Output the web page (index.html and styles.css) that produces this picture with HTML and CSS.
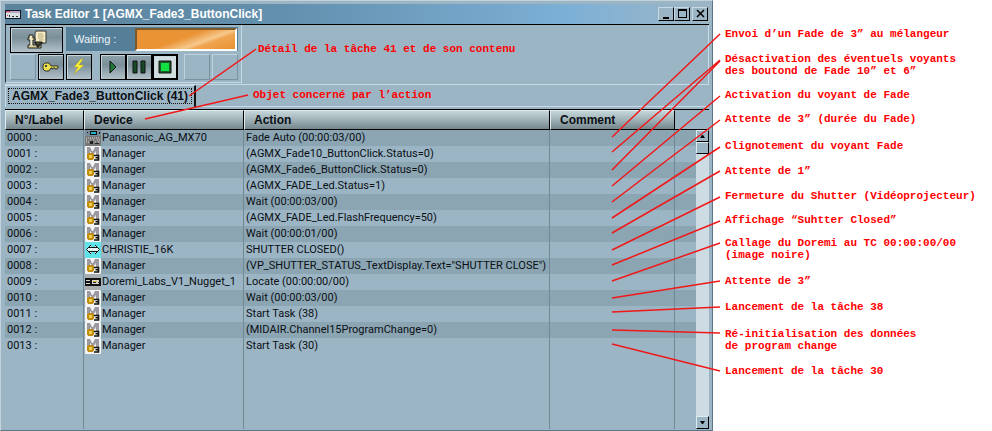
FILE: index.html
```
<!DOCTYPE html>
<html lang="fr">

<head>
  <meta charset="UTF-8">
  <meta name="viewport" content="width=device-width, initial-scale=1.0">
  <title>Task Editor 1</title>
  <link rel="stylesheet" href="styles.css">
</head>

<body>
  <!-- Icônes des machines -->
  <svg class="symbols" width="0" height="0" aria-hidden="true">
    <symbol id="manager" viewBox="0 0 16 16">
      <rect width="16" height="16" rx="1" fill="#f4f4f2"/>
      <path d="M2 10V1h3l2 4 1 0 2-4h4v8h-3V5L8 9 5 5v5z" fill="#9c98a2"/>
      <path d="M3 7h5v1h1v5H8v1H3v-1H2V8h1z" fill="#c08c0c"/>
      <path d="M4 9h3v3H4z" fill="#f0cf50"/>
      <path d="M9 9.500h4.500v4.500H9M10.500 11.700H14" fill="none" stroke="#111" stroke-width="1.600"/>
    </symbol>
    <symbol id="mixer" viewBox="0 0 16 16">
      <path d="M0 0h16v16H0z" fill="#777"/>
      <path d="M0 0h16v6H0z" fill="#788b98"/>
      <path d="M5 1h7v4H5z" fill="#111"/>
      <path d="M6 2h5v2H6z" fill="#1eb5c8"/>
      <path d="M2 2h1v1H2zM14 2h1v2h-1z" fill="#111"/>
      <path d="M1 8h3M5 8h3M9 8h1M11 8h3M1 10h2M5 10h2M8 10h2M12 10h3M1 12h3M10 12h2M13 12h1" stroke="#ddd" stroke-dasharray="1 1"/>
      <path d="M5 11h3v3H5zM10 13h4v1h-4z" fill="#222"/>
    </symbol>
    <symbol id="projector" viewBox="0 0 16 16">
      <path d="M0 0h16v16H0z" fill="#5fe3e8"/>
      <path d="M6 3L1 7.500 6 12V9.500h4V12l5-4.500L10 3v2.500H6z" fill="#e6f6f6"/>
      <path d="M6 3L1.500 7.500 6 12M10 3l4.500 4.500L10 12M4 5.500h8M4 9.500h8" fill="none" stroke="#111"/>
    </symbol>
    <symbol id="player" viewBox="0 0 16 16">
      <path d="M0 0h16v16H0z" fill="#a9adb0"/>
      <path d="M0 4h16v8H0z" fill="#111"/>
      <path d="M1 6h4v1H1zM1 9h4v1H1zM7 6h7v4H7z" fill="#d8d8d0"/>
      <path d="M8 7h4v1H8z" fill="#d5b92f"/>
      <path d="M8 8h3v1H8zM13 8h1v1h-1z" fill="#222"/>
    </symbol>
  </svg>

  <div class="page">
    <main class="editor">
      <header class="titlebar">
        <svg class="title-icon" width="16" height="9" viewBox="0 0 16 9" aria-hidden="true">
          <path d="M0 0h16v9H0z" fill="#15152a"/>
          <path d="M1 1h14v2H1z" fill="#b9a5c4"/>
          <path d="M1 3h14v5H1z" fill="#dbe2e6"/>
          <path d="M1 1h4v1H1zM2 5h1v1H2z" fill="#d0455a"/>
          <path d="M4 5h1v2H4zM7 6h2v1H7zM11 6h2v1h-2z" fill="#333"/>
        </svg>
        <h1>Task Editor 1 [AGMX_Fade3_ButtonClick]</h1>
        <div class="window-buttons">
          <button type="button" aria-label="Minimize"><svg width="12" height="12" viewBox="0 0 12 12"><path d="M3 9h6v2H3z"/></svg></button>
          <button type="button" aria-label="Maximize"><svg width="12" height="12" viewBox="0 0 12 12"><path d="M2 1h9v9H2zM3 3v6h7V3z" fill-rule="evenodd"/></svg></button>
          <button type="button" class="close" aria-label="Close"><svg width="12" height="12" viewBox="0 0 12 12"><path d="M3 2l7 7M10 2l-7 7" stroke="#000" stroke-width="1.500"/></svg></button>
        </div>
      </header>

      <section class="toolbar">
        <div class="tools">
          <div class="tools-row">
            <button type="button" class="tool wide" aria-label="Edit task">
              <svg width="22" height="20" viewBox="0 0 22 20">
                <path d="M10 1h10v12H9V3z" fill="#f6edc8" stroke="#333"/>
                <path d="M12 4h5M12 6h6M12 8h5M13 10h5" stroke="#b5a97a"/>
                <path d="M3 5h4v3h2v2H7v5h8v3H2v-3h2v-5H2V8h1z" fill="#d9d29a" stroke="#222"/>
                <path d="M5 6v9" stroke="#fff"/>
                <path d="M9 12h7v2h-3v3h-2v-3H9z" fill="#5a5a38" stroke="#111"/>
              </svg>
            </button>
            <div class="waiting">
              <label for="progress">Waiting :</label>
              <output id="progress" class="progress"></output>
            </div>
          </div>
          <div class="tools-row">
            <span class="slot"></span>
            <button type="button" class="tool" aria-label="Lock">
              <svg width="18" height="14" viewBox="0 0 18 14">
                <path d="M1 5l2-2h4l2 3h7v2h-1v1h-2V8h-2v1h-1V8H9l-2 3H3L1 9z" fill="#e8df4a" stroke="#333"/>
                <path d="M3 5h2v2H3z" fill="#444"/>
              </svg>
            </button>
            <button type="button" class="tool" aria-label="Trigger">
              <svg width="16" height="18" viewBox="0 0 16 18">
                <path d="M10 1L3 9h4l-4 7 10-9H8l4-6z" fill="#fff233" stroke="#a89e28" stroke-width=".5"/>
              </svg>
            </button>
            <span class="spacer"></span>
            <button type="button" class="tool joined" aria-label="Play">
              <svg width="12" height="14" viewBox="0 0 12 14"><path d="M3 1v12l6-6z" fill="#1f7a37" stroke="#111"/></svg>
            </button>
            <button type="button" class="tool joined" aria-label="Pause">
              <svg width="14" height="14" viewBox="0 0 14 14"><path d="M1 1h4v12H1zM9 1h4v12H9z" fill="#184a28" stroke="#111"/></svg>
            </button>
            <button type="button" class="tool joined active" aria-label="Stop">
              <svg width="14" height="14" viewBox="0 0 14 14"><path d="M1 1h12v12H1z" fill="#1c5a2c" stroke="#111"/><path d="M3 3h8v8H3z" fill="#10e040"/></svg>
            </button>
            <span class="spacer"></span>
            <span class="slot"></span>
            <span class="slot"></span>
          </div>
        </div>
      </section>

      <nav class="tabs">
        <button type="button" class="tab"><span>AGMX_Fade3_ButtonClick (41)</span></button>
      </nav>

      <div class="list">
        <table class="tasks">
          <colgroup>
            <col class="col-label">
            <col class="col-device">
            <col class="col-action">
            <col class="col-comment">
            <col>
          </colgroup>
          <thead>
            <tr>
              <th>N°/Label</th>
              <th>Device</th>
              <th>Action</th>
              <th>Comment</th>
              <td></td>
            </tr>
          </thead>
          <tbody>
            <tr><td>0000 :</td><td><svg class="icon"><use href="#mixer"/></svg>Panasonic_AG_MX70</td><td>Fade Auto (00:00:03/00)</td><td></td><td></td></tr>
            <tr><td>0001 :</td><td><svg class="icon"><use href="#manager"/></svg>Manager</td><td>(AGMX_Fade10_ButtonClick.Status=0)</td><td></td><td></td></tr>
            <tr><td>0002 :</td><td><svg class="icon"><use href="#manager"/></svg>Manager</td><td>(AGMX_Fade6_ButtonClick.Status=0)</td><td></td><td></td></tr>
            <tr><td>0003 :</td><td><svg class="icon"><use href="#manager"/></svg>Manager</td><td>(AGMX_FADE_Led.Status=1)</td><td></td><td></td></tr>
            <tr><td>0004 :</td><td><svg class="icon"><use href="#manager"/></svg>Manager</td><td>Wait (00:00:03/00)</td><td></td><td></td></tr>
            <tr><td>0005 :</td><td><svg class="icon"><use href="#manager"/></svg>Manager</td><td>(AGMX_FADE_Led.FlashFrequency=50)</td><td></td><td></td></tr>
            <tr><td>0006 :</td><td><svg class="icon"><use href="#manager"/></svg>Manager</td><td>Wait (00:00:01/00)</td><td></td><td></td></tr>
            <tr><td>0007 :</td><td><svg class="icon"><use href="#projector"/></svg>CHRISTIE_16K</td><td>SHUTTER CLOSED()</td><td></td><td></td></tr>
            <tr><td>0008 :</td><td><svg class="icon"><use href="#manager"/></svg>Manager</td><td>(VP_SHUTTER_STATUS_TextDisplay.Text="SHUTTER CLOSE")</td><td></td><td></td></tr>
            <tr><td>0009 :</td><td><svg class="icon"><use href="#player"/></svg>Doremi_Labs_V1_Nugget_1</td><td>Locate (00:00:00/00)</td><td></td><td></td></tr>
            <tr><td>0010 :</td><td><svg class="icon"><use href="#manager"/></svg>Manager</td><td>Wait (00:00:03/00)</td><td></td><td></td></tr>
            <tr><td>0011 :</td><td><svg class="icon"><use href="#manager"/></svg>Manager</td><td>Start Task (38)</td><td></td><td></td></tr>
            <tr><td>0012 :</td><td><svg class="icon"><use href="#manager"/></svg>Manager</td><td>(MIDAIR.Channel15ProgramChange=0)</td><td></td><td></td></tr>
            <tr><td>0013 :</td><td><svg class="icon"><use href="#manager"/></svg>Manager</td><td>Start Task (30)</td><td></td><td></td></tr>
            <tr class="rest"><td></td><td></td><td></td><td></td><td></td></tr>
          </tbody>
        </table>
        <div class="scrollbar">
          <button type="button" aria-label="Scroll up"><svg width="5" height="3" viewBox="0 0 5 3"><path d="M0 3h5L3 0H2z"/></svg></button>
          <div class="thumb"></div>
          <button type="button" class="down" aria-label="Scroll down"><svg width="5" height="3" viewBox="0 0 5 3"><path d="M0 0h5L3 3H2z"/></svg></button>
        </div>
      </div>

      <!-- Traits de légende -->
      <svg class="lines lines-left" width="260" height="130" aria-hidden="true">
        <path d="M189 96L256 49M145 119L248 95"/>
      </svg>
      <svg class="lines lines-right" width="110" height="380" aria-hidden="true">
        <path d="M1 137L109 34M1 152L109 60M1 170L109 61M1 186L109 96M1 202L109 120M1 218L109 147M1 233L109 171M1 250L109 197M1 265L109 221M1 281L109 243M1 298L109 281M1 312L109 307M1 330L109 333M1 344L109 371"/>
      </svg>
      <p class="note note-task">Détail de la tâche 41 et de son contenu</p>
      <p class="note note-device">Objet concerné par l’action</p>
    </main>

    <ul class="notes">
      <li>Envoi d’un Fade de 3” au mélangeur</li>
      <li>Désactivation des éventuels voyants<br>des boutond de Fade 10” et 6”</li>
      <li>Activation du voyant de Fade</li>
      <li>Attente de 3” (durée du Fade)</li>
      <li>Clignotement du voyant Fade</li>
      <li>Attente de 1”</li>
      <li>Fermeture du Shutter (Vidéoprojecteur)</li>
      <li>Affichage “Suhtter Closed”</li>
      <li>Callage du Doremi au TC 00:00:00/00<br>(image noire)</li>
      <li>Attente de 3”</li>
      <li>Lancement de la tâche 38</li>
      <li>Ré-initialisation des données<br>de program change</li>
      <li>Lancement de la tâche 30</li>
    </ul>
  </div>
</body>

</html>
```
FILE: styles.css
```
* {
  box-sizing: border-box;
}

body {
  margin: 0;
  background: #fff;
  font-family: "Liberation Sans", Arial, sans-serif;
  font-size: 11px;
  color: #0a0f14;
}

button {
  padding: 0;
  font: inherit;
  color: inherit;
}

.symbols {
  position: absolute;
}

.page {
  display: flex;
  min-height: 100vh;
}

/* Fenêtre */
.editor {
  position: relative;
  flex: 1;
  display: flex;
  flex-direction: column;
  padding: 3px 3px 1px 4px;
  background: #9cb5c4;
  border: 1px solid #c3d3dc;
  border-right-color: #5d7585;
  border-bottom-color: #5d7585;
}

.titlebar {
  display: flex;
  align-items: center;
  height: 21px;
  padding-right: 1px;
  border-bottom: 1px solid #000;
  background: linear-gradient(to right, #5b839b, #6390ae 40%, #7db0d6 80%, #8ab3d0 88%, #9cb5c4);
}

.titlebar h1 {
  flex: 1;
  margin: 0 0 0 4px;
  font-size: 12px;
  color: #fff;
}

.window-buttons {
  display: flex;
}

.window-buttons button {
  display: flex;
  align-items: center;
  justify-content: center;
  width: 16px;
  height: 14px;
  background: #9cb5c4;
  border: 1px solid #c9dae3;
  border-right-color: #000;
  border-bottom-color: #000;
}

.window-buttons .close {
  margin-left: 2px;
}

/* Barre d'outils */
.toolbar {
  border-bottom: 1px solid #c6dbe5;
  border-right: 1px solid #c6dbe5;
  padding-bottom: 1px;
}

.tools {
  width: 237px;
  height: 58px;
  padding: 2px 3px 2px 4px;
  border: 1px solid #c6dbe5;
  border-left-color: #26343d;
  border-top: 0;
}

.tools-row {
  display: flex;
  height: 27px;
}

.tool {
  display: flex;
  align-items: center;
  justify-content: center;
  width: 26px;
  height: 26px;
  margin-right: 2px;
  border: 1px solid #000;
  background: linear-gradient(#8fa3ad, #7b8f99 40%, #b3c2c9);
  box-shadow: inset 1px 1px #c6d6de;
}

.wide {
  width: 53px;
  margin-right: 3px;
}

.joined {
  margin-right: 0;
}

.active {
  background: #d2dde0;
  border-width: 2px;
}

.slot {
  width: 26px;
  height: 26px;
  margin-right: 2px;
  border: 1px solid #7b939f;
  border-top-color: #bcd2dd;
  border-left-color: #bcd2dd;
}

.spacer {
  flex: 1;
}

.tools-row .slot:last-child {
  margin-right: 0;
}

.waiting {
  flex: 1;
  display: flex;
  align-items: center;
  justify-content: space-between;
  height: 24px;
  padding: 0 1px 0 8px;
  background: #557f98;
  color: #eef5f8;
}

.progress {
  width: 102px;
  height: 23px;
  border: 2px solid #7d5a2c;
  border-right-color: #fff;
  border-bottom-color: #fff;
  background: linear-gradient(160deg, #ea9335 45%, #f6c88c 65%, #f0a552 72%, #e8922f);
}

/* Onglets */
.tabs {
  height: 22px;
  border-bottom: 1px solid #c6dbe5;
}

.tab {
  height: 22px;
  padding: 2px 2px 3px;
  background: #9cb5c4;
  border: 1px solid #c6dbe5;
  border-right: 2px solid #111;
  border-bottom: 0;
  font-size: 12px;
  font-weight: bold;
}

.tab span {
  display: block;
  padding: 0 3px;
  border: 1px dotted #111;
  line-height: 14px;
}

/* Liste des actions */
.list {
  flex: 1;
  display: flex;
  margin-top: 2px;
  border-top: 1px solid #000;
}

.tasks {
  flex: 1;
  width: 100%;
  min-width: 0;
  table-layout: fixed;
  border-collapse: separate;
  border-spacing: 0;
  font-family: Roboto, "Liberation Sans", sans-serif;
}

.col-label {
  width: 79px;
}

.col-device {
  width: 160px;
}

.col-action {
  width: 306px;
}

.col-comment {
  width: 125px;
}

.tasks th {
  height: 20px;
  padding: 0 9px;
  text-align: left;
  font-family: "Liberation Sans", Arial, sans-serif;
  font-size: 12px;
  line-height: 15px;
  background: linear-gradient(#c5d6da, #a3b5ba 45%, #74878d);
  border: 1px solid #dcebef;
  border-right-color: #000;
  border-bottom-color: #000;
}

.tasks td {
  height: 16px;
  padding: 0 2px;
  line-height: 16px;
  white-space: nowrap;
  border-right: 1px solid #708995;
}

.tasks td:last-child {
  border-right: 0;
}

.tasks thead td {
  border-bottom: 1px solid #000;
}

.tasks tbody tr:nth-child(odd):not(.rest) {
  background: #8ba5b3;
}

.tasks .rest td {
  height: auto;
}

.tasks td:nth-child(2) {
  padding-left: 1px;
}

.icon {
  width: 16px;
  height: 16px;
  margin-right: 1px;
  vertical-align: top;
}

.scrollbar {
  display: flex;
  flex-direction: column;
  width: 13px;
  margin-top: 19px;
  border-top: 1px solid #000;
  background: #cddbe3;
}

.scrollbar button,
.thumb {
  display: flex;
  align-items: center;
  justify-content: center;
  height: 12px;
  background: #9cb5c4;
  border: 1px solid #dcebef;
  border-right-color: #000;
  border-bottom-color: #000;
}

.scrollbar .down {
  height: 13px;
  margin-top: auto;
}

/* Légendes */
.note,
.notes {
  margin: 0;
  font-family: "Liberation Mono", "Courier New", monospace;
  font-size: 11px;
  font-weight: bold;
  line-height: 12px;
  color: #f00;
  white-space: nowrap;
}

.notes {
  display: grid;
  grid-template-rows: 25px 36px 24px 27px 25px 25px 24px 23px 38px 26px 27px 37px 12px;
  align-content: start;
  width: 279px;
  padding: 28px 0 0 12px;
  list-style: none;
}

.note {
  position: absolute;
}

.note-task {
  left: 257px;
  top: 42px;
}

.note-device {
  left: 252px;
  top: 88px;
}

.lines {
  position: absolute;
  top: -1px;
  fill: none;
  stroke: #f01818;
  stroke-width: 1.5;
  pointer-events: none;
}

.lines-left {
  left: -1px;
}

.lines-right {
  right: -9px;
}
```
